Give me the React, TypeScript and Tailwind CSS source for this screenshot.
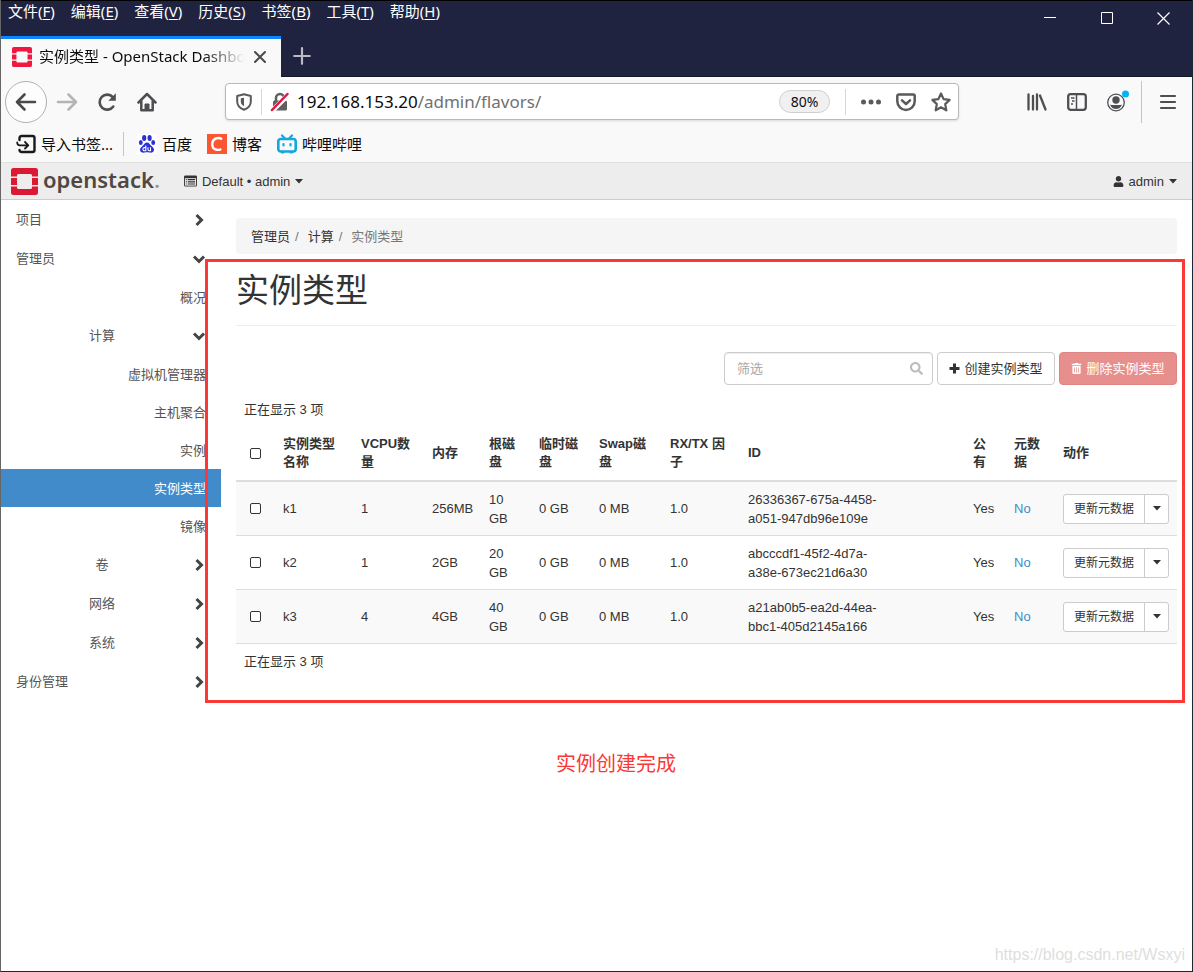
import type { ReactNode } from "react"
import { FaSearch, FaTrashAlt, FaUser } from "react-icons/fa"

const menus = [
  ["文件", "F"],
  ["编辑", "E"],
  ["查看", "V"],
  ["历史", "S"],
  ["书签", "B"],
  ["工具", "T"],
  ["帮助", "H"],
]

type NavItem = { label: string; level: 1 | 2 | 3; open?: boolean; active?: boolean }

const navItems: NavItem[] = [
  { label: "项目", level: 1 },
  { label: "管理员", level: 1, open: true },
  { label: "概况", level: 3 },
  { label: "计算", level: 2, open: true },
  { label: "虚拟机管理器", level: 3 },
  { label: "主机聚合", level: 3 },
  { label: "实例", level: 3 },
  { label: "实例类型", level: 3, active: true },
  { label: "镜像", level: 3 },
  { label: "卷", level: 2 },
  { label: "网络", level: 2 },
  { label: "系统", level: 2 },
  { label: "身份管理", level: 1 },
]

const columns = [
  { label: "实例类型名称", width: "w-[78px]" },
  { label: "VCPU数量", width: "w-[71px]" },
  { label: "内存", width: "w-[57px]" },
  { label: "根磁盘", width: "w-[50px]" },
  { label: "临时磁盘", width: "w-[60px]" },
  { label: "Swap磁盘", width: "w-[71px]" },
  { label: "RX/TX 因子", width: "w-[78px]" },
  { label: "ID", width: "" },
  { label: "公有", width: "w-[41px]" },
  { label: "元数据", width: "w-[49px]" },
  { label: "动作", width: "w-[122px]" },
]

const flavors = [
  { name: "k1", vcpus: 1, ram: "256MB", disk: "10 GB", id: "26336367-675a-4458-a051-947db96e109e" },
  { name: "k2", vcpus: 1, ram: "2GB", disk: "20 GB", id: "abcccdf1-45f2-4d7a-a38e-673ec21d6a30" },
  { name: "k3", vcpus: 4, ram: "4GB", disk: "40 GB", id: "a21ab0b5-ea2d-44ea-bbc1-405d2145a166" },
]

function Caret() {
  return (
    <svg width="8" height="5" viewBox="0 0 8 5" className="shrink-0" aria-hidden="true">
      <path d="M0 0h8L4 4.5z" fill="currentColor" />
    </svg>
  )
}

function Chevron({ open }: { open?: boolean }) {
  return (
    <svg width="14" height="14" viewBox="0 0 14 14" fill="none" stroke="#444" strokeWidth="3" className="shrink-0" aria-hidden="true">
      <path d={open ? "M2 4.5l5 5 5-5" : "M4.5 2l5 5-5 5"} />
    </svg>
  )
}

function OpenStackMark({ size, color }: { size: number; color: string }) {
  return (
    <svg width={size} height={size} viewBox="0 0 27 27" className="shrink-0" aria-hidden="true">
      <g fill={color}>
        <path d="M2.5 0h22A2.5 2.5 0 0 1 27 2.5V8.500h-6V7.500a1.500 1.500 0 0 0-1.500-1.500h-12A1.500 1.500 0 0 0 6 7.500v1H0v-6A2.500 2.500 0 0 1 2.500 0z" />
        <path d="M0 10h6v7H0zM21 10h6v7h-6z" />
        <path d="M2.500 27h22a2.500 2.500 0 0 0 2.500-2.500v-6h-6v1a1.500 1.500 0 0 1-1.500 1.500h-12A1.500 1.500 0 0 1 6 19.500v-1H0v6A2.500 2.500 0 0 0 2.500 27z" />
      </g>
    </svg>
  )
}

function IconButton({ label, children }: { label: string; children: ReactNode }) {
  return (
    <button type="button" aria-label={label} className="flex h-10 w-10 items-center justify-center text-[#4f4f52]">
      {children}
    </button>
  )
}

function TitleBar() {
  return (
    <header className="flex h-[77px] justify-between border-t border-b border-t-black border-b-[#15172b] bg-[#20233f] text-white">
      <div className="flex flex-col">
        <nav className="flex h-[35px] gap-4 pl-[7px] text-[15px] leading-5">
          {menus.map(([name, key]) => (
            <button key={key} type="button" className="h-5 whitespace-nowrap">
              {name}(<span className="underline underline-offset-2">{key}</span>)
            </button>
          ))}
        </nav>
        <div className="-mb-px flex flex-1 items-stretch">
          <div className="flex w-[280px] items-center gap-[7px] border-t-[3px] border-[#0a84ff] bg-[#f9f9fa] pr-[13px] pb-[2px] pl-[11px] text-[#0c0c0d]">
            <OpenStackMark size={20} color="#f0183f" />
            <span className="flex-1 overflow-hidden bg-linear-to-r from-[#0c0c0d] from-80% to-transparent bg-clip-text pb-[2px] text-[15px] leading-6 whitespace-nowrap text-transparent">
              实例类型 - OpenStack Dashboard
            </span>
            <button type="button" aria-label="关闭标签页">
              <svg width="16" height="16" viewBox="0 0 16 16" fill="none" stroke="#4a4a4d" strokeWidth="2" strokeLinecap="round">
                <path d="M3 3l10 10M13 3L3 13" />
              </svg>
            </button>
          </div>
          <button type="button" aria-label="新建标签页" className="flex w-[42px] items-center justify-center pb-[2px]">
            <svg width="18" height="18" viewBox="0 0 18 18" fill="none" stroke="#b9bac3" strokeWidth="2.2" strokeLinecap="round">
              <path d="M9 1.200v15.600M1.200 9h15.600" />
            </svg>
          </button>
        </div>
      </div>
      <div className="flex h-[34px]">
        <button type="button" aria-label="最小化" className="flex w-[57px] items-center justify-center">
          <svg width="12" height="12" viewBox="0 0 12 12" stroke="#fff">
            <path d="M0 5.500h12" />
          </svg>
        </button>
        <button type="button" aria-label="最大化" className="flex w-[57px] items-center justify-center">
          <svg width="12" height="12" viewBox="0 0 12 12" fill="none" stroke="#fff">
            <path d="M.5.5h11v11H.5z" />
          </svg>
        </button>
        <button type="button" aria-label="关闭" className="flex w-[57px] items-center justify-center">
          <svg width="13" height="13" viewBox="0 0 13 13" fill="none" stroke="#fff" strokeWidth="1.200">
            <path d="M.5.5l12 12M12.500.5l-12 12" />
          </svg>
        </button>
      </div>
    </header>
  )
}

function NavBar() {
  return (
    <div className="flex h-[49px] items-center bg-[#f9f9fa] pr-1 pl-1">
      <button type="button" aria-label="后退" className="flex h-[42px] w-[42px] items-center justify-center rounded-full border border-[#b1b1b3] bg-[#fdfdfd]">
        <svg width="22" height="22" viewBox="0 0 22 22" fill="none" stroke="#4a4a4d" strokeWidth="2.600" strokeLinecap="round" strokeLinejoin="round">
          <path d="M20 11H2.500M9.500 3.500L2 11l7.500 7.500" />
        </svg>
      </button>
      <IconButton label="前进">
        <svg width="22" height="22" viewBox="0 0 22 22" fill="none" stroke="#b5b5b7" strokeWidth="2.600" strokeLinecap="round" strokeLinejoin="round">
          <path d="M2 11h17.500M12.500 3.500L20 11l-7.500 7.500" />
        </svg>
      </IconButton>
      <IconButton label="刷新">
        <svg width="20" height="20" viewBox="0 0 20 20" fill="none" stroke="currentColor" strokeWidth="2.600" strokeLinecap="round">
          <path d="M16.300 14.500A7.500 7.500 0 1 1 15.800 5.200" />
          <path d="M18.800 1.300v7.500h-7.500z" fill="currentColor" stroke="none" />
        </svg>
      </IconButton>
      <IconButton label="主页">
        <svg width="20" height="20" viewBox="0 0 20 20" fill="none" stroke="currentColor" strokeWidth="2.500" strokeLinecap="round" strokeLinejoin="round">
          <path d="M1.500 10.500L10 2l8.500 8.500M4.300 9v9.200h11.400V9" />
          <path d="M8 18v-6h4v6z" fill="currentColor" strokeWidth="1" />
        </svg>
      </IconButton>

      <div className="mx-[58px] flex h-[37px] min-w-0 flex-1 items-center rounded-sm border border-[#b9b9bb] bg-white shadow-sm">
        <button type="button" aria-label="跟踪保护" className="flex h-[26px] w-9 items-center justify-center border-r border-[#d7d7db]">
          <svg width="16" height="18" viewBox="0 0 16 18" fill="none" stroke="#5a5a5d" strokeWidth="2">
            <path d="M8 1.200L14.800 3v5.500c0 4-2.800 6.800-6.800 8.300-4-1.500-6.800-4.300-6.800-8.300V3z" strokeLinejoin="round" />
            <path d="M8 4.700v8.600c-2-1.200-3.200-2.600-3.200-5V5.300z" fill="#5a5a5d" stroke="none" />
          </svg>
        </button>
        <button type="button" aria-label="连接不安全" className="flex w-[35px] items-center justify-center">
          <svg width="20" height="20" viewBox="0 0 20 20" fill="none">
            <rect x="3" y="8.500" width="14" height="10" rx="1.500" fill="#5f5f62" />
            <path d="M6 9V6a4 4 0 0 1 8 0v3" stroke="#5f5f62" strokeWidth="2.500" />
            <path d="M2.500 18.500L18.500 2.500" stroke="#fff" strokeWidth="5" />
            <path d="M2 18L17.500 2" stroke="#e6123f" strokeWidth="2.500" strokeLinecap="round" />
          </svg>
        </button>
        <div className="flex-1 overflow-hidden text-[17px] leading-6 whitespace-nowrap text-[#0c0c0d]">
          192.168.153.20<span className="text-[#707073]">/admin/flavors/</span>
        </div>
        <button type="button" className="mr-[15px] h-[23px] w-[51px] rounded-full border border-[#cfcfd1] bg-[#f0f0f1] text-sm leading-5 text-[#0c0c0d]">
          80%
        </button>
        <div className="flex h-[26px] items-center gap-[15px] border-l border-[#d7d7db] pr-[7px] pl-[15px] text-[#5a5a5d]">
          <button type="button" aria-label="页面操作">
            <svg width="20" height="20" viewBox="0 0 20 20" fill="currentColor">
              <circle cx="2.500" cy="10" r="2.500" />
              <circle cx="10" cy="10" r="2.500" />
              <circle cx="17.500" cy="10" r="2.500" />
            </svg>
          </button>
          <button type="button" aria-label="保存到 Pocket">
            <svg width="20" height="20" viewBox="0 0 20 20" fill="none" stroke="currentColor" strokeWidth="2.500" strokeLinecap="round" strokeLinejoin="round">
              <path d="M2.800 2.500h14.400a1.500 1.500 0 0 1 1.500 1.500v5.300a8.700 8.700 0 0 1-17.400 0V4a1.500 1.500 0 0 1 1.500-1.500zM6 8.300l4 3.700 4-3.700" />
            </svg>
          </button>
          <button type="button" aria-label="添加书签">
            <svg width="20" height="20" viewBox="0 0 20 20" fill="none" stroke="currentColor" strokeWidth="2.200" strokeLinejoin="round">
              <path d="M10 1.500l2.600 5.600 6 .8-4.400 4.200 1.100 6.200L10 15.300l-5.300 3 1.100-6.200L1.400 7.900l6-.8z" />
            </svg>
          </button>
        </div>
      </div>

      <IconButton label="我的足迹">
        <svg width="20" height="20" viewBox="0 0 20 20" fill="none" stroke="currentColor" strokeWidth="2.300" strokeLinecap="round">
          <path d="M1.500 2.500v15M6 4v13.500M10 2.500v15M13 3.500l5.500 14" />
        </svg>
      </IconButton>
      <IconButton label="侧栏">
        <svg width="20" height="20" viewBox="0 0 20 20" fill="none" stroke="currentColor" strokeWidth="2.300">
          <rect x="1.200" y="2.200" width="17.600" height="15.600" rx="2.500" />
          <path d="M9.500 2v16" strokeWidth="1.500" />
          <path d="M4 6h3.500M5 9h2.500M4 12h2" strokeWidth="1.300" />
        </svg>
      </IconButton>
      <IconButton label="账户">
        <svg width="24" height="24" viewBox="0 0 24 24" fill="none">
          <circle cx="11" cy="12.500" r="8.300" stroke="#4f4f52" strokeWidth="1.300" />
          <circle cx="11" cy="10" r="3.700" fill="#4f4f52" />
          <path d="M5 14.500c2 .8 3.500.4 6 .4s4 .4 6-.4c-1 3-3.300 4.600-6 4.600s-5-1.600-6-4.600z" fill="#4f4f52" />
          <circle cx="20.500" cy="4" r="3.500" fill="#00b3f4" />
        </svg>
      </IconButton>
      <div className="mr-1.5 ml-1 h-[42px] w-px bg-[#c4c4c6]" />
      <IconButton label="打开菜单">
        <svg width="18" height="18" viewBox="0 0 18 18" stroke="currentColor" strokeWidth="2.200" strokeLinecap="round">
          <path d="M2 3h14M2 9h14M2 15h14" />
        </svg>
      </IconButton>
    </div>
  )
}

function BookmarkBar() {
  return (
    <nav className="flex h-[37px] items-center gap-[15px] border-b border-[#e0e0e1] bg-[#f9f9fa] pb-px pl-[15px] text-[15px] leading-6 text-[#0c0c0d]">
      <div className="-mr-[2px] flex items-center border-r border-[#c4c4c6] pr-[10px]">
        <a href="#import" className="flex items-center gap-[5px]">
          <svg width="20" height="20" viewBox="0 0 20 20" fill="none" stroke="#1a1a1b" strokeWidth="2.400" strokeLinecap="round" strokeLinejoin="round">
            <path d="M3.500 6V4a2 2 0 0 1 2-2h11a2 2 0 0 1 2 2v12a2 2 0 0 1-2 2h-11a2 2 0 0 1-2-2" />
            <path d="M1.200 8.500c0 2 .8 2.800 2.800 2.800h8M9 8l3.300 3.300L9 14.500" strokeWidth="1.800" />
          </svg>
          导入书签...
        </a>
      </div>
      <a href="#baidu" className="flex items-center gap-[5px]">
        <svg width="20" height="20" viewBox="0 0 20 20" fill="#2a2fd6">
          <rect width="20" height="20" fill="#fff" />
          <ellipse cx="7.200" cy="4" rx="2.100" ry="2.900" />
          <ellipse cx="12.600" cy="4" rx="2.100" ry="2.900" />
          <ellipse cx="3.800" cy="8.500" rx="1.900" ry="2.600" />
          <ellipse cx="16.200" cy="8.500" rx="1.900" ry="2.600" />
          <path d="M10 8.500c2 0 2.600 1.600 4 3s3 2.300 3 4.200c0 2-1.500 3-3.400 3-1.400 0-2-.4-3.600-.4s-2.200.4-3.600.4c-1.900 0-3.400-1-3.400-3 0-1.900 1.600-2.800 3-4.200s2-3 4-3z" />
          <path d="M8.800 11.500v5.300H7.500a1.600 1.600 0 0 1 0-3.200h1.300M11 13.300v2.300c0 .8.300 1.200 1 1.200h1.500v-3.500" fill="none" stroke="#fff" strokeWidth="1.100" />
        </svg>
        百度
      </a>
      <a href="#csdn" className="flex items-center gap-[5px]">
        <svg width="20" height="20" viewBox="0 0 20 20">
          <rect width="20" height="20" fill="#fc5531" />
          <path d="M15 5.200c-4-2.600-9.800-.5-9.800 5s5.400 6.800 9 4.700" fill="none" stroke="#fff" strokeWidth="2.300" />
        </svg>
        博客
      </a>
      <a href="#bilibili" className="flex items-center gap-[5px]">
        <svg width="20" height="20" viewBox="0 0 20 20" fill="none" stroke="#12a7e0" strokeWidth="2.600" strokeLinecap="round">
          <rect x="1.300" y="5" width="17.400" height="12.500" rx="2.500" />
          <path d="M5 1.500L7.500 4M15 1.500L12.500 4" strokeWidth="2.200" />
          <path d="M6.500 10v1.500M13.500 10v1.500" strokeWidth="2.200" />
          <path d="M5 18.500h1.500M13.500 18.500H15" strokeWidth="2" />
        </svg>
        哔哩哔哩
      </a>
    </nav>
  )
}

function DashboardHeader() {
  return (
    <div className="flex h-[37px] items-center border-b border-[#ccc] bg-[#ededed] pr-[15px] pl-[10px] text-[13px] text-[#333]">
      <a href="#home" className="flex items-center gap-[5px]">
        <OpenStackMark size={27} color="#da1a32" />
        <span className="pb-1 font-['Noto_Sans',sans-serif] text-[22px] leading-8 font-semibold text-[#4f4843]">
          openstack<span className="text-[#999]">.</span>
        </span>
      </a>
      <button type="button" className="ml-6 flex items-center gap-[5px]">
        <svg width="13" height="12" viewBox="0 0 14 12" aria-hidden="true">
          <path d="M1.500 0h11A1.500 1.500 0 0 1 14 1.500v9a1.500 1.500 0 0 1-1.500 1.500h-11A1.500 1.500 0 0 1 0 10.500v-9A1.500 1.500 0 0 1 1.500 0z" fill="#333" />
          <path d="M1 3h12v8H1z" fill="#ededed" />
          <path d="M2 4.500h1M4 4.500h8M2 6.900h1M4 6.900h8M2 9.300h1M4 9.300h8" stroke="#333" strokeWidth="1.200" />
        </svg>
        <span>Default • admin</span>
        <Caret />
      </button>
      <button type="button" className="ml-auto flex items-center gap-[5px]">
        <FaUser size={11} />
        <span>admin</span>
        <Caret />
      </button>
    </div>
  )
}

function Sidebar() {
  return (
    <nav className="flex w-[220px] shrink-0 flex-col text-[#555]">
      {navItems.map((item) => {
        if (item.level === 3) {
          return (
            <a
              key={item.label}
              href="#panel"
              className={
                item.active
                  ? "flex h-[38px] items-center justify-end bg-[#428bca] pr-[15px] text-white"
                  : "flex h-[38px] items-center justify-end pr-[15px]"
              }
            >
              {item.label}
            </a>
          )
        }
        return (
          <button key={item.label} type="button" aria-expanded={!!item.open} className="flex h-[39px] items-center gap-1 pr-[15px] pl-[15px]">
            <span className={item.level === 2 ? "flex-1 text-center" : "flex-1 text-left"}>{item.label}</span>
            <Chevron open={item.open} />
          </button>
        )
      })}
    </nav>
  )
}

function Checkbox({ label }: { label: string }) {
  return (
    <input
      type="checkbox"
      aria-label={label}
      className="block h-[11px] w-[11px] appearance-none rounded-[2px] border border-[#333] bg-white checked:bg-[#428bca]"
    />
  )
}

function FlavorTable() {
  return (
    <table className="w-full table-fixed border-separate border-spacing-0 text-left">
      <thead>
        <tr>
          <th className="w-[39px] border-b-2 border-[#ddd] pl-[14px]">
            <Checkbox label="全选" />
          </th>
          {columns.map((col) => (
            <th key={col.label} className={`${col.width} border-b-2 border-[#ddd] px-2 pt-2 pb-[9px] leading-[18px] font-bold`}>
              {col.label}
            </th>
          ))}
        </tr>
      </thead>
      <tbody className="leading-[19px]">
        {flavors.map((flavor) => (
          <tr key={flavor.name} className="h-[54px] odd:bg-[#f9f9f9] *:border-b *:border-[#ddd] *:pl-2">
            <td>
              <div className="pl-[6px]">
                <Checkbox label={flavor.name} />
              </div>
            </td>
            <td>{flavor.name}</td>
            <td>{flavor.vcpus}</td>
            <td>{flavor.ram}</td>
            <td className="pr-2">{flavor.disk}</td>
            <td>0 GB</td>
            <td>0 MB</td>
            <td>1.0</td>
            <td>
              <div className="max-w-[140px]">{flavor.id}</div>
            </td>
            <td>Yes</td>
            <td>
              <a href="#metadata" className="text-[#428bca]">
                No
              </a>
            </td>
            <td>
              <div className="flex h-[30px] w-[106px] rounded-[3px] border border-[#ccc] bg-white text-xs">
                <button type="button" className="flex-1 border-r border-[#ccc] whitespace-nowrap">
                  更新元数据
                </button>
                <button type="button" aria-label="更多动作" className="flex w-[23px] items-center justify-center">
                  <Caret />
                </button>
              </div>
            </td>
          </tr>
        ))}
      </tbody>
    </table>
  )
}

export default function App() {
  return (
    <div className="relative flex min-h-screen flex-col border-r border-b border-l border-r-[#1b2733] border-b-[#1b2733] border-l-[#666] bg-white font-['Noto_Sans','Noto_Sans_CJK_SC',sans-serif]">
      <TitleBar />
      <NavBar />
      <BookmarkBar />
      <div className="flex flex-1 flex-col font-['Liberation_Sans','Noto_Sans_CJK_SC',sans-serif] text-[13px] leading-[19px] text-[#333]">
        <DashboardHeader />
        <div className="relative flex flex-1">
          <Sidebar />
          <main className="min-w-0 flex-1 pt-[18px] pr-[15px] pl-[15px]">
            <ol className="flex h-9 items-center rounded bg-[#f5f5f5] px-[15px]">
              <li>
                <a href="#admin">管理员</a>
              </li>
              <li className="px-[5px] text-[#777]">/</li>
              <li className="pl-1">
                <a href="#compute">计算</a>
              </li>
              <li className="px-[5px] text-[#777]">/</li>
              <li className="pl-1 text-[#777]">实例类型</li>
            </ol>
            <h1 className="mt-[17px] border-b border-[#eee] pb-[14px] text-[33px] leading-10">实例类型</h1>
            <div className="mt-[26px] flex justify-end gap-1">
              <div className="relative">
                <input
                  type="text"
                  aria-label="筛选"
                  placeholder="筛选"
                  className="h-[33px] w-[209px] rounded border border-[#ccc] pr-8 pl-3 shadow-[inset_0_1px_1px_rgba(0,0,0,0.075)] placeholder:text-[#aaa]"
                />
                <FaSearch size={13} className="absolute top-[10px] right-[10px] text-[#bbb]" />
              </div>
              <button type="button" className="flex h-[33px] w-[118px] items-center justify-center gap-1 rounded border border-[#ccc] bg-white whitespace-nowrap">
                <svg width="11" height="11" viewBox="0 0 11 11" stroke="currentColor" strokeWidth="3" aria-hidden="true">
                  <path d="M5.500.5v10M.5 5.500h10" />
                </svg>
                创建实例类型
              </button>
              <button
                type="button"
                disabled
                className="flex h-[33px] w-[118px] items-center justify-center gap-1 rounded border border-[#e08583] bg-[#e78f8c] whitespace-nowrap text-white"
              >
                <FaTrashAlt size={11} />
                删除实例类型
              </button>
            </div>
            <div className="flex h-[42px] items-center pt-[6px] pl-2">正在显示 3 项</div>
            <FlavorTable />
            <div className="flex h-[34px] items-center pl-2">正在显示 3 项</div>
          </main>
          {/* callout over the main panel */}
          <div className="pointer-events-none absolute top-[59px] right-[7px] left-[204px] h-[444px] border-[3px] border-[#fb3835]" />
          <p className="absolute top-[549px] left-[555px] text-xl leading-[30px] text-[#fb3835]">实例创建完成</p>
        </div>
      </div>
      <p className="absolute right-[7px] bottom-[6px] font-['Liberation_Sans',sans-serif] text-base leading-5 text-[#dedede]">
        https://blog.csdn.net/Wsxyi
      </p>
    </div>
  )
}
